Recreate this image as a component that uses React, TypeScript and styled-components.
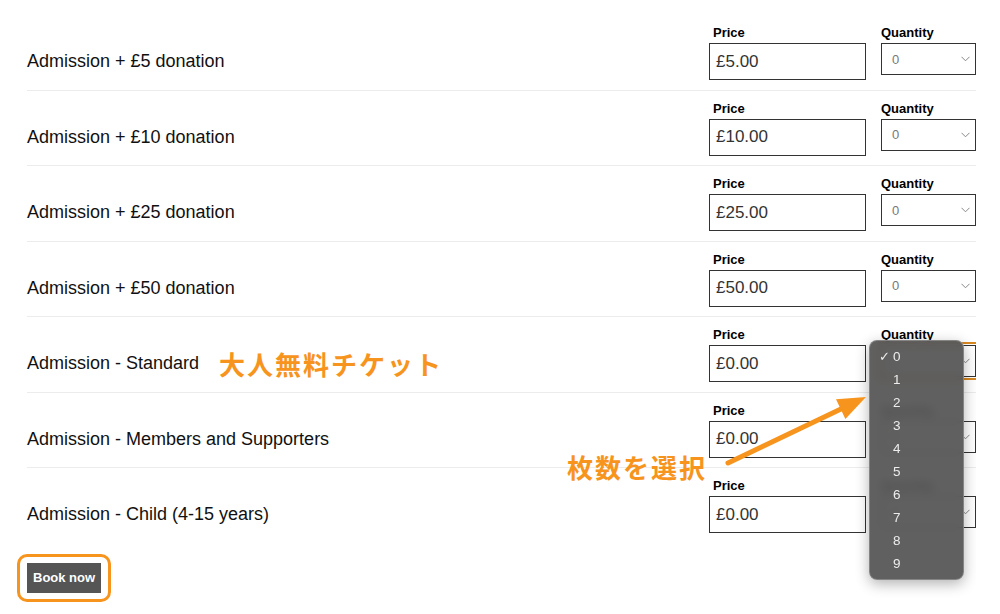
import React from 'react';
import styled, { createGlobalStyle, css } from 'styled-components';

const ORANGE = '#f7941d';

const GlobalStyle = createGlobalStyle`
  html, body {
    margin: 0;
    padding: 0;
    background: #fff;
  }
  body {
    font-family: 'Liberation Sans', Arial, Helvetica, sans-serif;
    color: #111;
  }
`;

type Ticket = {
  name: string;
  price: string;
  note?: string;
};

const TICKETS: Ticket[] = [
  { name: 'Admission + £5 donation', price: '£5.00' },
  { name: 'Admission + £10 donation', price: '£10.00' },
  { name: 'Admission + £25 donation', price: '£25.00' },
  { name: 'Admission + £50 donation', price: '£50.00' },
  { name: 'Admission - Standard', price: '£0.00', note: '大人無料チケット' },
  { name: 'Admission - Members and Supporters', price: '£0.00' },
  { name: 'Admission - Child (4-15 years)', price: '£0.00' },
];

const OPEN_ROW = 4;
const QUANTITIES = ['0', '1', '2', '3', '4', '5', '6', '7', '8', '9'];

const Page = styled.div`
  position: relative;
  width: 976px;
  height: 614px;
  padding: 15px 0 0 27px;
  box-sizing: border-box;
  overflow: hidden;
`;

const TicketList = styled.div`
  display: flex;
  flex-direction: column;
`;

const TicketRow = styled.div<{ $last?: boolean }>`
  display: grid;
  grid-template-columns: 1fr 157px 95px;
  column-gap: 15px;
  align-items: start;
  padding: 10px 0 9.5px;
  border-bottom: 1px solid ${({ $last }) => ($last ? 'transparent' : '#ececec')};
`;

const Name = styled.div`
  align-self: end;
  display: flex;
  align-items: center;
  height: 37px;
  font-size: 18px;
  color: #111;
`;

const jpText = css`
  font-family: 'Noto Sans CJK JP', 'Noto Sans', sans-serif;
  font-weight: 700;
  font-size: 26px;
  letter-spacing: 2px;
  color: ${ORANGE};
`;

const Note = styled.span`
  ${jpText}
  margin-left: 20px;
  line-height: 30px;
`;

const Field = styled.div`
  position: relative;
  display: flex;
  flex-direction: column;
  gap: 2px;
`;

const Label = styled.label<{ $inset?: boolean }>`
  font-size: 13px;
  font-weight: 700;
  line-height: 16px;
  padding-left: ${({ $inset }) => ($inset ? '4px' : '0')};
  color: #000;
`;

const PriceInput = styled.input`
  box-sizing: border-box;
  width: 157px;
  height: 37px;
  padding: 0 6px;
  border: 1px solid #333;
  border-radius: 0;
  font-family: inherit;
  font-size: 17px;
  color: #333;
  background: #fff;
  outline: none;
`;

const QuantityBox = styled.div<{ $focused?: boolean }>`
  box-sizing: border-box;
  display: flex;
  align-items: center;
  justify-content: space-between;
  width: 95px;
  height: 32px;
  padding: 0 5px 0 10px;
  border: 1px solid #333;
  font-size: 13px;
  color: #777;
  background: #fff;
  outline: ${({ $focused }) => ($focused ? `2px solid #d9881f` : 'none')};
  outline-offset: 1px;
`;

const Menu = styled.ul`
  position: absolute;
  top: 13px;
  left: -12px;
  z-index: 5;
  width: 95px;
  margin: 0;
  padding: 4px 0;
  list-style: none;
  box-sizing: border-box;
  border-radius: 8px;
  border: 1px solid rgba(150, 150, 150, 0.7);
  background: rgba(84, 84, 84, 0.93);
  backdrop-filter: blur(5px);
  box-shadow: 0 4px 14px rgba(0, 0, 0, 0.3);
`;

const MenuItem = styled.li`
  display: flex;
  align-items: center;
  height: 23px;
  padding-left: 9px;
  font-size: 13.5px;
  color: #ececec;
`;

const Check = styled.span`
  width: 14px;
  font-size: 13px;
`;

const BookOutline = styled.div`
  display: inline-flex;
  margin: 10px 0 0 -10px;
  padding: 6px 7px;
  border: 3px solid ${ORANGE};
  border-radius: 10px;
`;

const BookButton = styled.button`
  height: 30px;
  padding: 0 6px;
  border: none;
  border-radius: 0;
  background: #555;
  color: #fff;
  font-family: inherit;
  font-size: 13px;
  font-weight: 700;
`;

const Callout = styled.div`
  ${jpText}
  position: absolute;
  left: 567px;
  top: 452px;
  line-height: 30px;
  z-index: 6;
`;

const ArrowSvg = styled.svg`
  position: absolute;
  left: 720px;
  top: 390px;
  z-index: 6;
`;

const Chevron = () => (
  <svg width="9" height="6" viewBox="0 0 9 6">
    <polyline points="0.5,0.8 4.5,4.8 8.5,0.8" fill="none" stroke="#888" strokeWidth="1" />
  </svg>
);

const QuantitySelect = ({ open }: { open?: boolean }) => (
  <>
    <QuantityBox $focused={open}>
      <span>0</span>
      <Chevron />
    </QuantityBox>
    {open && (
      <Menu>
        {QUANTITIES.map((q) => (
          <MenuItem key={q}>
            <Check>{q === '0' ? '✓' : ''}</Check>
            {q}
          </MenuItem>
        ))}
      </Menu>
    )}
  </>
);

const App = () => (
  <>
    <GlobalStyle />
    <Page>
      <TicketList>
        {TICKETS.map((ticket, index) => (
          <TicketRow key={ticket.name} $last={index === TICKETS.length - 1}>
            <Name>
              {ticket.name}
              {ticket.note && <Note>{ticket.note}</Note>}
            </Name>
            <Field>
              <Label $inset>Price</Label>
              <PriceInput readOnly value={ticket.price} />
            </Field>
            <Field>
              <Label>Quantity</Label>
              <QuantitySelect open={index === OPEN_ROW} />
            </Field>
          </TicketRow>
        ))}
      </TicketList>
      <BookOutline>
        <BookButton>Book now</BookButton>
      </BookOutline>

      <Callout>枚数を選択</Callout>
      <ArrowSvg width="150" height="80" viewBox="0 0 150 80">
        <line x1="8" y1="73" x2="122" y2="18.5" stroke={ORANGE} strokeWidth="5" strokeLinecap="round" />
        <polygon points="146,7 125.4,29 116,9.2" fill={ORANGE} />
      </ArrowSvg>
    </Page>
  </>
);

export default App;
